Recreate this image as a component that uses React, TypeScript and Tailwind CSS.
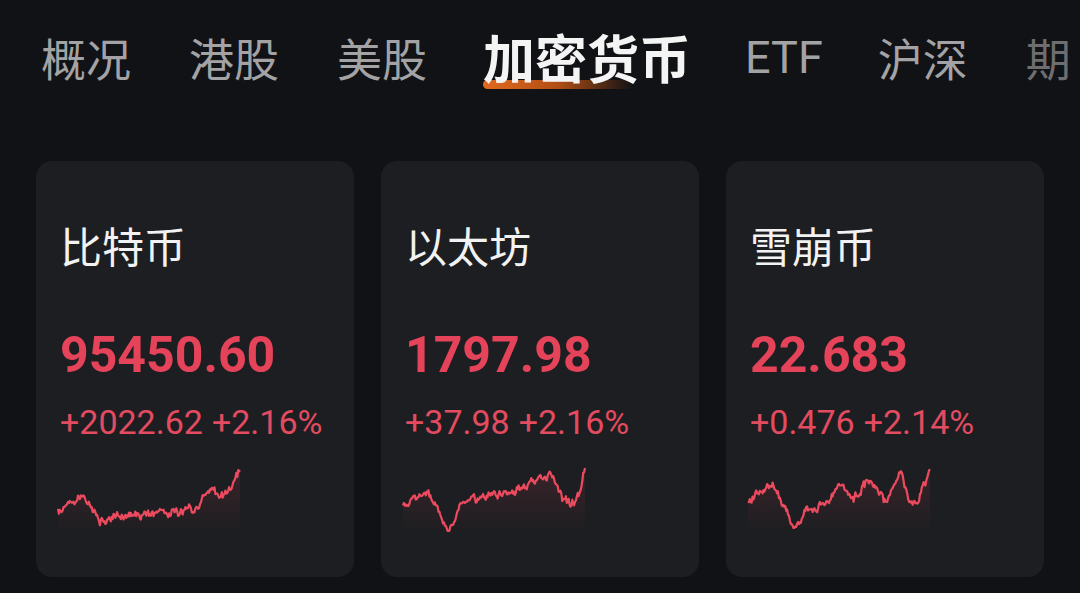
import React from "react";

const CJK = '"Noto Sans CJK SC", "Noto Sans", sans-serif';
const NUM = 'Roboto, "Noto Sans", sans-serif';

function rng(seed: number) {
  let s = seed;
  return () => {
    s = (s * 16807) % 2147483647;
    return (s - 1) / 2147483646;
  };
}

function buildPath(keys: [number, number][], seed: number) {
  const r = rng(seed);
  const pts: [number, number][] = [];
  const W = 182;
  const n = 200;
  let drift = 0;
  for (let i = 0; i <= n; i++) {
    const x = (i / n) * W;
    let k = 0;
    while (k < keys.length - 2 && keys[k + 1][0] < x) k++;
    const [x0, y0] = keys[k];
    const [x1, y1] = keys[k + 1];
    const t = Math.min(1, Math.max(0, (x - x0) / (x1 - x0 || 1)));
    let y = y0 + (y1 - y0) * t;
    drift = drift * 0.6 + (r() - 0.5) * 6;
    y += drift + (r() - 0.5) * 4;
    pts.push([x, Math.max(1, Math.min(64, y))]);
  }
  const line = pts.map((p, i) => `${i ? "L" : "M"}${p[0].toFixed(1)} ${p[1].toFixed(1)}`).join(" ");
  const area = `${line} L${W} 65 L0 65 Z`;
  return { line, area };
}

const charts: [number, number][][] = [
  [
    [0, 46], [10, 38], [22, 32], [30, 36], [45, 56], [60, 50], [80, 50], [100, 44], [120, 46], [135, 42], [145, 28], [155, 22], [165, 30], [172, 20], [178, 8], [182, 2],
  ],
  [
    [0, 42], [12, 30], [25, 26], [32, 38], [45, 62], [60, 36], [80, 30], [95, 26], [110, 28], [120, 20], [135, 12], [150, 6], [160, 34], [168, 38], [176, 26], [182, 2],
  ],
  [
    [0, 38], [12, 23], [25, 16], [32, 30], [47, 63], [60, 43], [75, 38], [92, 16], [105, 30], [122, 13], [138, 36], [152, 6], [160, 28], [168, 38], [176, 18], [182, 2],
  ],
];

type Coin = { name: string; price: string; change: string; pct: string };
const coins: Coin[] = [
  { name: "比特币", price: "95450.60", change: "+2022.62", pct: "+2.16%" },
  { name: "以太坊", price: "1797.98", change: "+37.98", pct: "+2.16%" },
  { name: "雪崩币", price: "22.683", change: "+0.476", pct: "+2.14%" },
];

function Spark({ idx }: { idx: number }) {
  const { line, area } = buildPath(charts[idx], 17 + idx * 31);
  const gid = `g${idx}`;
  return (
    <svg width="182" height="66" viewBox="0 0 182 66" className="overflow-visible">
      <defs>
        <linearGradient id={gid} x1="0" y1="0" x2="0" y2="1">
          <stop offset="0" stopColor="#e8455c" stopOpacity="0.14" />
          <stop offset="1" stopColor="#e8455c" stopOpacity="0" />
        </linearGradient>
      </defs>
      <path d={area} fill={`url(#${gid})`} />
      <path d={line} fill="none" stroke="#ec4a5e" strokeWidth="2.2" strokeLinejoin="round" />
    </svg>
  );
}

function Card({ coin, idx }: { coin: Coin; idx: number }) {
  return (
    <div className="w-[318px] h-[416px] rounded-[16px] bg-[#1d1e21] flex flex-col pl-[24px]">
      <div className="mt-[63px] text-[42px] leading-none text-[#f2f2f2]" style={{ fontFamily: CJK }}>
        {coin.name}
      </div>
      <div
        className="mt-[64px] text-[50px] leading-none font-bold text-[#e5435a]"
        style={{ fontFamily: NUM }}
      >
        {coin.price}
      </div>
      <div
        className="mt-[25px] text-[34px] leading-none text-[#e34b60] flex gap-[9px]"
        style={{ fontFamily: NUM }}
      >
        <span>{coin.change}</span>
        <span>{coin.pct}</span>
      </div>
      <div className="mt-[28px] -ml-[2px]">
        <Spark idx={idx} />
      </div>
    </div>
  );
}

export default function App() {
  const tabs = ["概况", "港股", "美股", "加密货币", "ETF", "沪深", "期"];
  return (
    <div className="w-[1080px] h-[593px] bg-[#111215] overflow-hidden">
      <div className="h-[114px] flex items-center pl-[41px] gap-[58px] whitespace-nowrap" style={{ fontFamily: CJK }}>
        {tabs.map((t) =>
          t === "加密货币" ? (
            <div key={t} className="relative -ml-[2px] -mr-[4px]">
              <div className="absolute left-0 top-[49px] w-[150px] h-[9px] rounded-full bg-gradient-to-r from-[#e36a1e] via-[#b04e14] to-transparent" />
              <span className="relative text-[52px] leading-none font-bold text-[#f4f4f4]">{t}</span>
            </div>
          ) : (
            <span
              key={t}
              className={`text-[45px] leading-none ${t === "期" ? "text-[#6e6e70]" : "text-[#a3a3a5]"} ${t === "沪深" ? "-ml-[3px]" : ""}`}
              style={t === "ETF" ? { fontFamily: NUM } : undefined}
            >
              {t}
            </span>
          )
        )}
      </div>
      <div className="mt-[47px] flex gap-[27px] pl-[36px]">
        {coins.map((c, i) => (
          <Card key={c.name} coin={c} idx={i} />
        ))}
      </div>
    </div>
  );
}
